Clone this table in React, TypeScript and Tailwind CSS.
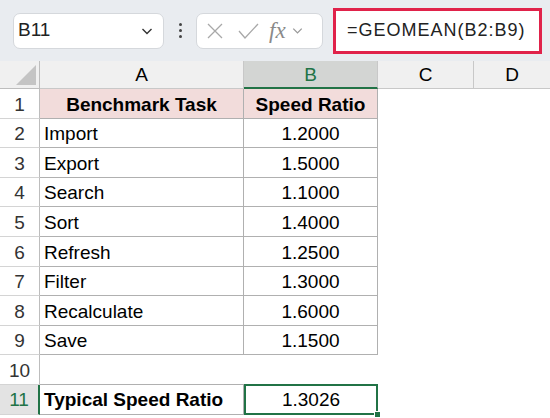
const rows: [string, string][] = [
  ["Import", "1.2000"],
  ["Export", "1.5000"],
  ["Search", "1.1000"],
  ["Sort", "1.4000"],
  ["Refresh", "1.2500"],
  ["Filter", "1.3000"],
  ["Recalculate", "1.6000"],
  ["Save", "1.1500"],
];

function Chevron({ className }: { className?: string }) {
  return (
    <svg viewBox="0 0 16 16" className={className} fill="none" stroke="currentColor" strokeWidth="1.4">
      <path d="M3.5 6l4.5 4.5L12.5 6" />
    </svg>
  );
}

function RowHead({ n, active }: { n: number; active?: boolean }) {
  return (
    <div
      className={
        "flex items-center justify-center pt-[3px] border-b border-[#d4d4d4] " +
        (active
          ? "bg-[#e3e3e3] text-[#217346] border-r-2 border-r-[#217346]"
          : "bg-white text-[#333] border-r border-r-[#bdbdbd]")
      }
    >
      {n}
    </div>
  );
}

export default function App() {
  return (
    <div className="w-[550px] h-[418px] overflow-hidden bg-white font-['Liberation_Sans',Arial,sans-serif] text-[19px] text-black">
      {/* formula bar */}
      <div className="h-[61px] bg-[#e9ecf0] flex items-center pl-[13px]">
        <div className="w-[151px] h-[36px] rounded-[7px] border border-[#d5d8dc] bg-white flex items-center justify-between pl-[4px] pr-[8px]">
          <span className="text-[19px] text-[#222]">B11</span>
          <Chevron className="w-[16px] h-[16px] text-[#333]" />
        </div>
        <div className="w-[32px] flex flex-col items-center gap-[3px]">
          <span className="w-[3px] h-[3px] bg-[#444] rounded-full" />
          <span className="w-[3px] h-[3px] bg-[#444] rounded-full" />
          <span className="w-[3px] h-[3px] bg-[#444] rounded-full" />
        </div>
        <div className="w-[127px] h-[36px] rounded-[7px] border border-[#d5d8dc] bg-white flex items-center pl-[8px] text-[#a8a8a8]">
          <svg viewBox="0 0 20 20" className="w-[20px] h-[20px]" fill="none" stroke="currentColor" strokeWidth="1.3">
            <path d="M3 3l14 14M17 3L3 17" />
          </svg>
          <svg viewBox="0 0 22 20" className="w-[22px] h-[20px] ml-[12px]" fill="none" stroke="currentColor" strokeWidth="1.3">
            <path d="M2 10l6 7L21 3" />
          </svg>
          <span className="ml-[10px] font-['Liberation_Serif',serif] italic text-[23px] leading-none text-[#8a8a8a]">fx</span>
          <Chevron className="w-[15px] h-[15px] ml-[4px] text-[#999]" />
        </div>
        <div className="ml-[10px] w-[209px] h-[46px] border-[3px] border-[#e0224a] bg-white flex items-center pl-[11px]">
          <span className="text-[18px] tracking-[1px] text-[#222]">=GEOMEAN(B2:B9)</span>
        </div>
      </div>

      {/* grid */}
      <div className="grid grid-cols-[40px_204px_134px_96px_76px] grid-rows-[28px_repeat(11,29.6px)]">
        {/* column headers */}
        <div className="bg-[#f0f0f0] border-b border-r border-[#bdbdbd] flex items-end justify-end p-[3px]">
          <div className="w-0 h-0 border-l-[20px] border-l-transparent border-b-[20px] border-b-[#c4c4c4]" />
        </div>
        <div className="bg-[#f0f0f0] border-b border-r border-[#c8c8c8] flex items-center justify-center pt-[2px]">A</div>
        <div className="bg-[#d3d5d3] border-b-2 border-b-[#217346] border-r border-r-[#c8c8c8] flex items-center justify-center pt-[2px] text-[#217346]">B</div>
        <div className="bg-[#f0f0f0] border-b border-r border-[#c8c8c8] flex items-center justify-center pt-[2px]">C</div>
        <div className="bg-[#f0f0f0] border-b border-[#c8c8c8] flex items-center justify-center pt-[2px]">D</div>

        {/* row 1 */}
        <RowHead n={1} />
        <div className="bg-[#f2dcdb] border-r border-b border-[#b0b0b0] flex items-center justify-center pt-[3px] font-bold">Benchmark Task</div>
        <div className="bg-[#f2dcdb] border-r border-b border-[#b0b0b0] flex items-center justify-center pt-[3px] font-bold">Speed Ratio</div>
        <div />
        <div />

        {rows.map(([task, v], i) => (
          <div key={task} className="contents">
            <RowHead n={i + 2} />
            <div className="border-r border-b border-[#b0b0b0] flex items-center pl-[4px] pt-[3px]">{task}</div>
            <div className="border-r border-b border-[#b0b0b0] flex items-center justify-center pt-[3px]">{v}</div>
            <div />
            <div />
          </div>
        ))}

        {/* row 10 */}
        <RowHead n={10} />
        <div className="border-b border-[#b0b0b0]" />
        <div />
        <div />
        <div />

        {/* row 11 */}
        <RowHead n={11} active />
        <div className="border-b border-r border-[#b0b0b0] flex items-center pl-[4px] pt-[3px] font-bold">Typical Speed Ratio</div>
        <div className="relative border-2 border-[#217346] flex items-center justify-center pt-[2px] -mt-px">
          1.3026
          <span className="absolute -right-[5px] -bottom-[5px] w-[7px] h-[7px] bg-[#217346] border border-white" />
        </div>
        <div />
        <div />
      </div>
    </div>
  );
}
